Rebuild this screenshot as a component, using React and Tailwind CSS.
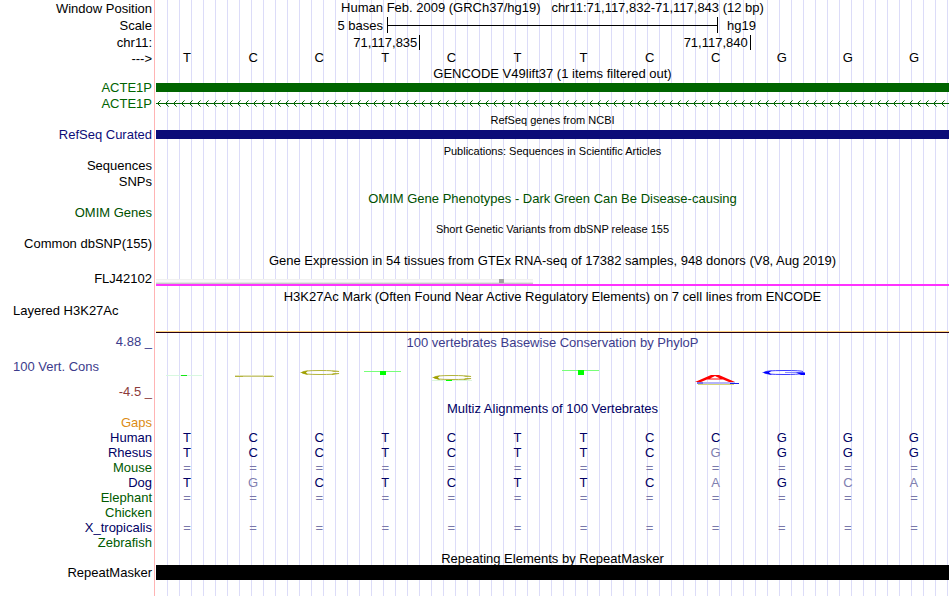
import React from 'react';

const bases = 'TCCTCTTCCGGG'.split('');

// lower case letters mark positions that differ from the human base
const alignments = [
  { name: 'Gaps', color: 'text-[#dc8c14]', seq: '' },
  { name: 'Human', color: 'text-[#000064]', seq: 'TCCTCTTCCGGG' },
  { name: 'Rhesus', color: 'text-[#000064]', seq: 'TCCTCTTCgGGG' },
  { name: 'Mouse', color: 'text-[#005a00]', seq: '============' },
  { name: 'Dog', color: 'text-[#000064]', seq: 'TgCTCTTCaGca' },
  { name: 'Elephant', color: 'text-[#005a00]', seq: '============' },
  { name: 'Chicken', color: 'text-[#005a00]', seq: '' },
  { name: 'X_tropicalis', color: 'text-[#000064]', seq: '============' },
  { name: 'Zebrafish', color: 'text-[#005a00]', seq: '' },
];

const Row = ({ label, height = 'h-4', color = 'text-black', children }) => (
  <div className={`flex items-center ${height}`}>
    <div className={`w-[156px] shrink-0 pr-1 text-right ${color}`}>{label}</div>
    <div className="flex h-full min-w-0 flex-1 items-center">{children}</div>
  </div>
);

const Title = ({ children, height = 'h-4', color = 'text-black', size = 'text-[13px]' }) => (
  <div className={`ml-[156px] flex items-center justify-center pt-0.5 whitespace-pre ${height} ${color}`}>
    <h2 className={size}>{children}</h2>
  </div>
);

const Arrows = () => (
  <svg className="h-[7px] w-full" shapeRendering="crispEdges" aria-hidden="true">
    <defs>
      <pattern id="arrows" width="8" height="7" patternUnits="userSpaceOnUse">
        <rect x="0" y="3" width="8" height="1" fill="#006400" />
        <rect x="2" y="2" width="1" height="1" fill="#006400" />
        <rect x="2" y="4" width="1" height="1" fill="#006400" />
        <rect x="3" y="1" width="1" height="1" fill="#006400" />
        <rect x="3" y="5" width="1" height="1" fill="#006400" />
        <rect x="4" y="0" width="1" height="1" fill="#64a064" />
        <rect x="4" y="6" width="1" height="1" fill="#64a064" />
      </pattern>
    </defs>
    <rect width="100%" height="7" fill="url(#arrows)" />
  </svg>
);

const Expression = () => (
  <svg className="h-full w-full" viewBox="0 0 793 18" preserveAspectRatio="none" aria-hidden="true">
    <rect x="0" y="10" width="377" height="5" fill="#f8f8f8" />
    <rect x="0" y="10" width="377" height="1" fill="#f0f0f0" />
    <rect x="0" y="13" width="377" height="1" fill="#e6e6e6" />
    <rect x="0" y="14" width="377" height="1" fill="#c8c8c8" />
    <rect x="343" y="10" width="5" height="4" fill="#a0a0a0" />
    <rect x="0" y="15" width="793" height="2" fill="#ff32ff" />
  </svg>
);

const Conservation = () => (
  <svg className="h-[49px] w-full" viewBox="0 0 793 49" preserveAspectRatio="none" aria-hidden="true">
    {/* T */}
    <rect x="10" y="24" width="36" height="1" fill="#d8f8e0" />
    <rect x="25" y="24" width="6" height="1" fill="#14e614" />
    {/* C */}
    <rect x="79" y="24" width="38" height="1" fill="#e1e1b4" />
    <rect x="80" y="25" width="38" height="1" fill="#c8c878" />
    <rect x="79" y="25" width="8" height="1" fill="#b4b43c" />
    <rect x="108" y="25" width="8" height="1" fill="#b4b43c" />
    {/* C */}
    <path d="M183 20.5 Q178 19.5 164 19.5 Q146 19.5 146 21.5 Q146 23.5 164 23.5 Q178 23.5 183 22.5" fill="none" stroke="#b4b43c" />
    <path d="M144 21.5 L152 19.5 L150 21.5 L152 24 Z M184 21 L175 20 L178 21 Z M184 22 L175 24 L177 22.5 Z" fill="#a0a000" />
    {/* T */}
    <rect x="208" y="20" width="37" height="1" fill="#78ff78" />
    <rect x="224" y="20" width="6" height="4" fill="#00ff00" />
    {/* C */}
    <rect x="276" y="29" width="40" height="1" fill="#dcf5dc" />
    <path d="M315 25.5 Q310 24.5 296 24.5 Q278 24.5 278 26.5 Q278 28.5 296 28.5 Q310 28.5 315 27.5" fill="none" stroke="#b4b43c" />
    <path d="M276 26.5 L284 24.5 L282 26.5 L284 29 Z M316 26 L307 25 L310 26 Z M316 27 L307 29 L309 27.5 Z" fill="#a0a000" />
    <rect x="290" y="29" width="6" height="1" fill="#00ff00" />
    {/* T */}
    <rect x="406" y="19" width="37" height="1" fill="#78ff78" />
    <rect x="422" y="19" width="6" height="5" fill="#00ff00" />
    {/* A */}
    <path d="M539 31 L555 24 L563 24 L579 31 L573 31 L567 28.5 L551 28.5 L545 31 Z M554 27.5 L564 27.5 L559 25 Z" fill="#ff0000" fillRule="evenodd" />
    <rect x="541" y="31" width="38" height="2" fill="#b4b4fa" />
    <rect x="541" y="31" width="6" height="2" fill="#7878e6" />
    <rect x="574" y="32" width="9" height="1" fill="#1e1ee6" />
    <rect x="542" y="33" width="36" height="1" fill="#d7d778" />
    {/* G */}
    <path d="M647 20.5 Q645 19.5 628 19.5 Q608 19.5 608 21.5 Q608 23.5 628 23.5 Q642 23.5 646 22.5" fill="none" stroke="#3c3cff" />
    <path d="M629 21.5 H648" fill="none" stroke="#8c8cff" />
    <path d="M606 21.5 L616 19.5 L613 21.5 L616 24 Z M640 21.5 L649 21.5 V24 H645 Z" fill="#0000ff" />
  </svg>
);

const Base = ({ letter }) => {
  const differs = letter !== letter.toUpperCase();
  if (letter === '=') return <span className="text-[#7878aa]">=</span>;
  return <span className={differs ? 'text-[#8080b0]' : ''}>{letter.toUpperCase()}</span>;
};

const App = () => {
  return (
    <main className="w-full pr-px pb-4 font-['Liberation_Sans',Arial,sans-serif] text-[13px] leading-[15px] text-black [background:linear-gradient(#ffb4b4,#ffb4b4)_154px_0/1px_100%_no-repeat,repeating-linear-gradient(90deg,transparent_0_11px,#dcdcf8_11px_12px)_156px_0/100%_100%_no-repeat,white]">
      {/* Position and scale */}
      <Row label="Window Position" height="h-[17px]">
        <h1 className="w-full pb-0.5 text-center whitespace-pre">
          {'Human Feb. 2009 (GRCh37/hg19)   chr11:71,117,832-71,117,843 (12 bp)'}
        </h1>
      </Row>
      <Row label="Scale">
        <div className="grid h-full w-full grid-cols-[231fr_331fr_231fr] items-center">
          <span className="pr-1 text-right">5 bases</span>
          <span className="flex h-full items-center border-x border-black">
            <span className="h-px w-full bg-black" />
          </span>
          <span className="pl-[9px]">hg19</span>
        </div>
      </Row>
      <Row label="chr11:" height="h-[18px]">
        <div className="grid w-full grid-cols-12">
          <span className="col-span-4 border-r border-black pr-0.5 text-right">71,117,835</span>
          <span className="col-span-5 border-r border-black pr-0.5 text-right">71,117,840</span>
        </div>
      </Row>
      <Row label="--->" height="h-[14px]">
        <div className="grid w-full grid-cols-12 pb-0.5">
          {bases.map((base, i) => (
            <span key={i} className="pr-1 text-center">{base}</span>
          ))}
        </div>
      </Row>

      {/* Genes */}
      <Title height="h-[15px]">GENCODE V49lift37 (1 items filtered out)</Title>
      <Row label="ACTE1P" color="text-[#006400]" height="h-[15px]">
        <div className="h-[9px] w-full bg-[#006400]" />
      </Row>
      <Row label="ACTE1P" color="text-[#006400]">
        <Arrows />
      </Row>
      <Title size="text-[11px]">RefSeq genes from NCBI</Title>
      <Row label="RefSeq Curated" color="text-[#0c0c78]" height="h-[15px]">
        <div className="h-[9px] w-full bg-[#0c0c78]" />
      </Row>

      {/* Publications and variants */}
      <Title size="text-[11px]">Publications: Sequences in Scientific Articles</Title>
      <Row label="Sequences" height="h-[15px]" />
      <Row label="SNPs" />
      <Title color="text-[#005000]">OMIM Gene Phenotypes - Dark Green Can Be Disease-causing</Title>
      <Row label="OMIM Genes" color="text-[#005000]" height="h-[15px]" />
      <Title size="text-[11px]">Short Genetic Variants from dbSNP release 155</Title>
      <Row label="Common dbSNP(155)" height="h-[15px]" />

      {/* Expression */}
      <Title>
        Gene Expression in 54 tissues from GTEx RNA-seq of 17382 samples, 948 donors (V8, Aug 2019)
      </Title>
      <div className="pt-0.5">
        <Row label="FLJ42102" height="h-[18px]">
          <Expression />
        </Row>
      </div>

      {/* Regulation */}
      <Title>H3K27Ac Mark (Often Found Near Active Regulatory Elements) on 7 cell lines from ENCODE</Title>
      <div className="flex h-[30px]">
        <div className="w-[156px] shrink-0 pl-[13px]">Layered H3K27Ac</div>
        <div className="flex flex-1 flex-col justify-end">
          <div className="h-px bg-[#ffd27d]" />
          <div className="h-px bg-[#280014]" />
        </div>
      </div>

      {/* Conservation */}
      <div className="flex text-[#3c3c8c]">
        <div className="flex w-[156px] shrink-0 flex-col justify-between pt-px pr-1 pb-px text-right">
          <span>4.88 _</span>
          <span className="pl-[13px] text-left">100 Vert. Cons</span>
          <span className="text-[#8c3c3c]">-4.5 _</span>
        </div>
        <div className="min-w-0 flex-1">
          <h2 className="pt-0.5 text-center leading-4">100 vertebrates Basewise Conservation by PhyloP</h2>
          <Conservation />
        </div>
      </div>

      {/* Alignments */}
      <Title color="text-[#000064]" height="h-[15px]">Multiz Alignments of 100 Vertebrates</Title>
      <table className="w-full table-fixed border-collapse">
        <tbody>
          {alignments.map((row) => (
            <tr key={row.name} className="h-[15px]">
              <th scope="row" className={`w-[156px] p-0 pr-1 text-right font-normal ${row.color}`}>
                {row.name}
              </th>
              {bases.map((_, i) => (
                <td key={i} className="p-0 pr-1 text-center text-[#000064]">
                  {row.seq[i] && <Base letter={row.seq[i]} />}
                </td>
              ))}
            </tr>
          ))}
        </tbody>
      </table>

      {/* Repeats */}
      <Title height="h-[15px]">Repeating Elements by RepeatMasker</Title>
      <Row label="RepeatMasker" height="h-[15px]">
        <div className="h-full w-full bg-black" />
      </Row>
    </main>
  );
};

export default App;
